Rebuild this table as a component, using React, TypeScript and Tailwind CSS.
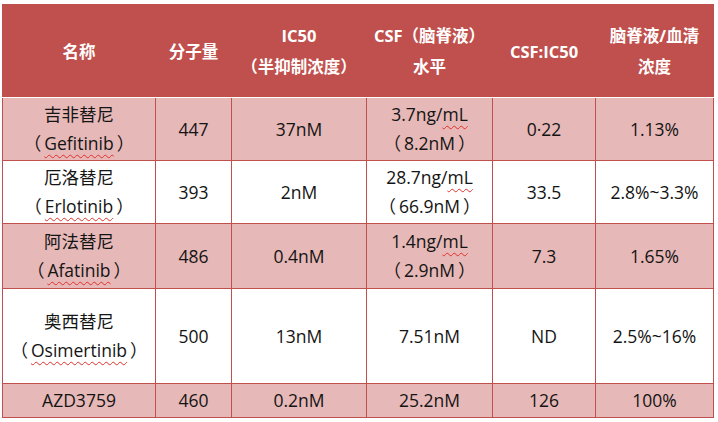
const RED = "bg-[#c0504d]";

type Cell = { main: React.ReactNode; sub?: React.ReactNode };

const Wavy = ({ children }: { children: React.ReactNode }) => (
  <span className="underline decoration-wavy decoration-[#e0302a] decoration-1 underline-offset-[4px]">
    {children}
  </span>
);

// full-width parens with a thin gap, as in the source document
const Paren = ({ children }: { children: React.ReactNode }) => (
  <>
    （<span className="ml-[3px] mr-[3px]">{children}</span>）
  </>
);

const rows: { h: string; pink: boolean; cells: Cell[] }[] = [
  {
    h: "h-[63px]",
    pink: true,
    cells: [
      { main: "吉非替尼", sub: <Paren><Wavy>Gefitinib</Wavy></Paren> },
      { main: "447" },
      { main: "37nM" },
      { main: <>3.7ng/<Wavy>mL</Wavy></>, sub: <Paren>8.2nM</Paren> },
      { main: "0·22" },
      { main: "1.13%" },
    ],
  },
  {
    h: "h-[63px]",
    pink: false,
    cells: [
      { main: "厄洛替尼", sub: <Paren><Wavy>Erlotinib</Wavy></Paren> },
      { main: "393" },
      { main: "2nM" },
      { main: <>28.7ng/<Wavy>mL</Wavy></>, sub: <Paren>66.9nM</Paren> },
      { main: "33.5" },
      { main: "2.8%~3.3%" },
    ],
  },
  {
    h: "h-[65px]",
    pink: true,
    cells: [
      { main: "阿法替尼", sub: <Paren><Wavy>Afatinib</Wavy></Paren> },
      { main: "486" },
      { main: "0.4nM" },
      { main: <>1.4ng/<Wavy>mL</Wavy></>, sub: <Paren>2.9nM</Paren> },
      { main: "7.3" },
      { main: "1.65%" },
    ],
  },
  {
    h: "h-[95px]",
    pink: false,
    cells: [
      { main: "奥西替尼", sub: <Paren><Wavy>Osimertinib</Wavy></Paren> },
      { main: "500" },
      { main: "13nM" },
      { main: "7.51nM" },
      { main: "ND" },
      { main: "2.5%~16%" },
    ],
  },
  {
    h: "h-[34px]",
    pink: true,
    cells: [
      { main: "AZD3759" },
      { main: "460" },
      { main: "0.2nM" },
      { main: "25.2nM" },
      { main: "126" },
      { main: "100%" },
    ],
  },
];

const widths = ["w-[153px]", "w-[76px]", "w-[135px]", "w-[126px]", "w-[103px]", "w-[118px]"];

export default function App() {
  return (
    <div
      className="w-[718px] h-[422px] bg-white pt-1 pl-[2px] overflow-hidden"
      style={{ fontFamily: '"Open Sans", "Noto Sans CJK SC", sans-serif' }}
    >
      <table className="table-fixed border-collapse w-[711px] text-center">
        <colgroup>
          {widths.map((w) => (
            <col key={w} className={w} />
          ))}
        </colgroup>
        <thead>
          <tr className={`h-[93px] ${RED} text-white font-bold text-[16.5px] leading-[31px]`}>
            <th className="border border-[#c0504d] border-b-white">名称</th>
            <th className="border border-[#c0504d] border-b-white">分子量</th>
            <th className="border border-[#c0504d] border-b-white whitespace-nowrap">
              IC50
              <br />
              （半抑制浓度）
            </th>
            <th className="border border-[#c0504d] border-b-white whitespace-nowrap">
              CSF（脑脊液）
              <br />
              水平
            </th>
            <th className="border border-[#c0504d] border-b-white">CSF:IC50</th>
            <th className="border border-[#c0504d] border-b-white whitespace-nowrap">
              脑脊液/血清
              <br />
              浓度
            </th>
          </tr>
        </thead>
        <tbody>
          {rows.map((r, i) => (
            <tr
              key={i}
              className={`${r.h} ${r.pink ? "bg-[#e6b8b7]" : "bg-white"} text-[#141414] text-[17.5px] leading-[29px]`}
            >
              {r.cells.map((c, j) => (
                <td key={j} className="border border-[#c0504d] p-0 whitespace-nowrap">
                  <div>{c.main}</div>
                  {c.sub && <div>{c.sub}</div>}
                </td>
              ))}
            </tr>
          ))}
        </tbody>
      </table>
    </div>
  );
}
